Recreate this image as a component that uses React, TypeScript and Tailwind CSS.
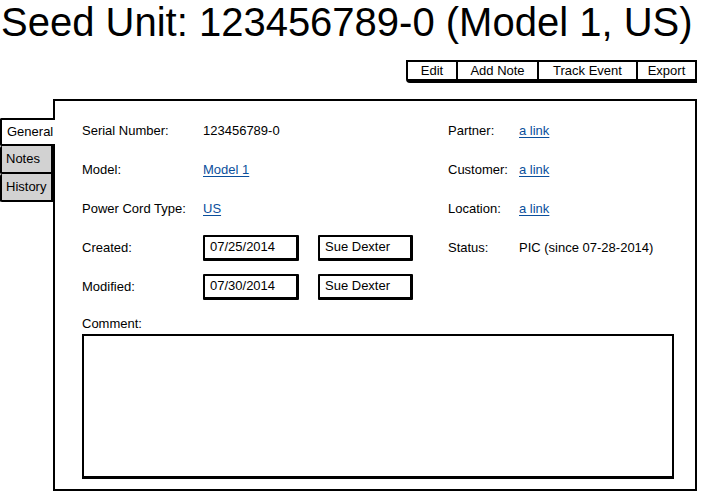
import React from 'react';

const LINK = 'text-[#0b4f9c] underline underline-offset-2';

function Row({
  label,
  children,
  rightLabel,
  right,
}: {
  label: string;
  children: React.ReactNode;
  rightLabel?: string;
  right?: React.ReactNode;
}) {
  return (
    <div className="flex h-[39px] items-center">
      <div className="flex w-[366px] items-center">
        <span className="w-[121px]">{label}</span>
        {children}
      </div>
      {rightLabel && (
        <div className="flex items-center">
          <span className="w-[71px]">{rightLabel}</span>
          {right}
        </div>
      )}
    </div>
  );
}

function Box({ value, w }: { value: string; w: string }) {
  return (
    <div
      className={`${w} h-[26px] flex items-center pl-[5px] border-2 border-black border-r-[3px] border-b-[3px] rounded-[1px]`}
    >
      {value}
    </div>
  );
}

export default function App() {
  const buttons = [
    { label: 'Edit', w: 'w-[48px]' },
    { label: 'Add Note', w: 'w-[81px]' },
    { label: 'Track Event', w: 'w-[99px]' },
    { label: 'Export', w: 'w-[59px]' },
  ];

  return (
    <div className="w-[702px] h-[493px] bg-white text-black font-['Liberation_Sans',Arial,sans-serif] text-[13px] overflow-hidden">
      {/* Title */}
      <h1 className="h-[40px] text-[40px] leading-[45px] pl-[1px] whitespace-nowrap">
        Seed Unit: 123456789-0 (Model 1, US)
      </h1>

      {/* Toolbar */}
      <div className="mt-[20px] flex justify-end pr-[5px]">
        <div className="flex border-2 border-black border-b-[4px] rounded-bl-[4px]">
          {buttons.map((b, i) => (
            <div
              key={b.label}
              className={`${b.w} h-[17px] flex items-center justify-center leading-none ${i > 0 ? 'border-l-2 border-black' : ''}`}
            >
              {b.label}
            </div>
          ))}
        </div>
      </div>

      {/* Tabs + panel */}
      <div className="mt-[16px] flex">
        <div className="w-[55px] pt-[19px] flex flex-col">
          <div className="relative z-10 w-[55px] h-[28px] flex items-center pl-[5px] bg-white border-2 border-r-0 border-black rounded-l-[2px]">
            General
          </div>
          <div className="w-[53px] h-[28px] flex items-center pl-[4px] bg-[#d2d2d2] border-2 border-t-0 border-black rounded-l-[2px]">
            Notes
          </div>
          <div className="w-[53px] h-[28px] flex items-center pl-[4px] bg-[#d2d2d2] border-2 border-t-0 border-black rounded-l-[2px]">
            History
          </div>
        </div>

        <div className="-ml-[2px] w-[644px] h-[392px] border-2 border-black pl-[27px] pt-[10px]">
          <Row label="Serial Number:" rightLabel="Partner:" right={<span className={LINK}>a link</span>}>
            <span>123456789-0</span>
          </Row>
          <Row label="Model:" rightLabel="Customer:" right={<span className={LINK}>a link</span>}>
            <span className={LINK}>Model 1</span>
          </Row>
          <Row label="Power Cord Type:" rightLabel="Location:" right={<span className={LINK}>a link</span>}>
            <span className={LINK}>US</span>
          </Row>
          <Row label="Created:" rightLabel="Status:" right={<span>PIC (since 07-28-2014)</span>}>
            <div className="flex gap-[19px]">
              <Box value="07/25/2014" w="w-[96px]" />
              <Box value="Sue Dexter" w="w-[95px]" />
            </div>
          </Row>
          <Row label="Modified:">
            <div className="flex gap-[19px]">
              <Box value="07/30/2014" w="w-[96px]" />
              <Box value="Sue Dexter" w="w-[95px]" />
            </div>
          </Row>

          <div className="mt-[10px] leading-[16px]">Comment:</div>
          <div className="mt-[2px] w-[592px] h-[145px] border-2 border-black border-b-[3px]" />
        </div>
      </div>
    </div>
  );
}
